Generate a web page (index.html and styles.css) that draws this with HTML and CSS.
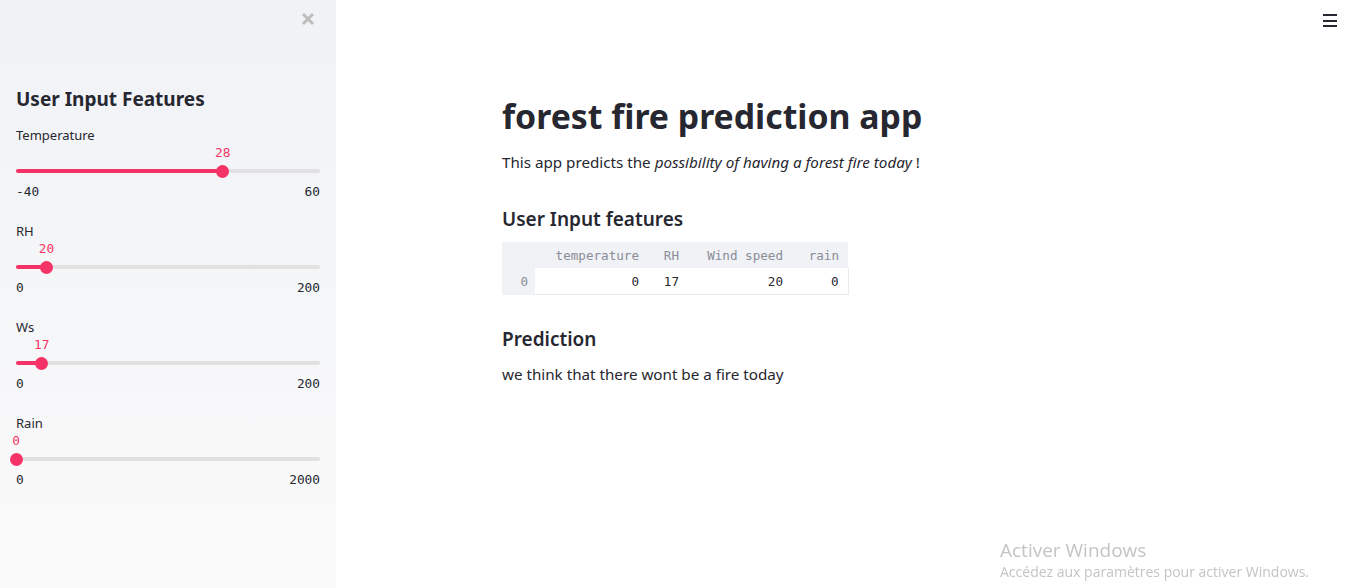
FILE: index.html
```html
<!DOCTYPE html>
<html lang="en">
<head>
<meta charset="utf-8">
<title>forest fire prediction app</title>
<link rel="stylesheet" href="styles.css">
</head>
<body>
<div class="app">
  <aside class="sidebar">
    <div class="close-row">
      <svg class="close" width="14" height="14" viewBox="0 0 14 14"><path d="M2 2L12 12M12 2L2 12" stroke="#bdbdbd" stroke-width="3" stroke-linecap="butt"/></svg>
    </div>
    <h2 class="side-title">User Input Features</h2>

    <div class="slider">
      <div class="s-label">Temperature</div>
      <div class="s-track-wrap">
        <div class="s-track">
          <div class="s-fill" style="width:68%"></div>
          <div class="s-thumb" style="left:68%"><span class="s-value">28</span></div>
        </div>
      </div>
      <div class="s-ticks"><span>-40</span><span>60</span></div>
    </div>

    <div class="slider">
      <div class="s-label">RH</div>
      <div class="s-track-wrap">
        <div class="s-track">
          <div class="s-fill" style="width:10%"></div>
          <div class="s-thumb" style="left:10%"><span class="s-value">20</span></div>
        </div>
      </div>
      <div class="s-ticks"><span>0</span><span>200</span></div>
    </div>

    <div class="slider">
      <div class="s-label">Ws</div>
      <div class="s-track-wrap">
        <div class="s-track">
          <div class="s-fill" style="width:8.5%"></div>
          <div class="s-thumb" style="left:8.5%"><span class="s-value">17</span></div>
        </div>
      </div>
      <div class="s-ticks"><span>0</span><span>200</span></div>
    </div>

    <div class="slider">
      <div class="s-label">Rain</div>
      <div class="s-track-wrap">
        <div class="s-track">
          <div class="s-fill" style="width:0%"></div>
          <div class="s-thumb" style="left:0%"><span class="s-value">0</span></div>
        </div>
      </div>
      <div class="s-ticks"><span>0</span><span>2000</span></div>
    </div>
  </aside>

  <main class="main">
    <div class="topbar">
      <div class="hamburger"><span></span><span></span><span></span></div>
    </div>
    <div class="content">
      <h1 class="title">forest fire prediction app</h1>
      <p class="intro">This app predicts the <em>possibility of having a forest fire today</em> !</p>
      <h3 class="section">User Input features</h3>
      <table class="df">
        <thead>
          <tr><th class="idx"></th><th class="c1">temperature</th><th class="c2">RH</th><th class="c3">Wind speed</th><th class="c4">rain</th></tr>
        </thead>
        <tbody>
          <tr><th class="idx">0</th><td>0</td><td>17</td><td>20</td><td>0</td></tr>
        </tbody>
      </table>
      <h3 class="section pred">Prediction</h3>
      <p class="result">we think that there wont be a fire today</p>
    </div>
  </main>
</div>
<div class="watermark">
  <div class="wm-1">Activer Windows</div>
  <div class="wm-2">Accédez aux paramètres pour activer Windows.</div>
</div>
</body>
</html>
```

FILE: styles.css
```css
html, body {
  margin: 0;
  padding: 0;
  height: 100%;
  overflow: hidden;
}
body {
  font-family: "Noto Sans", "Open Sans", sans-serif;
  color: #262730;
  background: #ffffff;
}
.app {
  display: flex;
  height: 588px;
}
.sidebar {
  width: 336px;
  flex: none;
  box-sizing: border-box;
  padding: 0 16px;
  background: linear-gradient(180deg, #f0f2f6 0%, #fafafa 100%);
}
.close-row {
  display: flex;
  justify-content: flex-end;
  height: 85px;
  padding-top: 12px;
  box-sizing: border-box;
  padding-right: 5px;
}
.close { display: block; }
.side-title {
  margin: 0 0 12px;
  font-size: 19px;
  font-weight: 700;
  line-height: 28px;
}
.slider {
  margin-bottom: 20px;
}
.s-label {
  font-size: 13px;
  line-height: 20px;
  height: 20px;
}
.s-track-wrap {
  padding-top: 16px;
  height: 20px;
  display: flex;
  align-items: center;
}
.s-track {
  position: relative;
  width: 100%;
  height: 4px;
  border-radius: 2px;
  background: #e1e1e1;
}
.s-fill {
  height: 100%;
  border-radius: 2px;
  background: #f63366;
}
.s-thumb {
  position: absolute;
  top: 50%;
  width: 13px;
  height: 13px;
  margin: -6.5px 0 0 -6.5px;
  border-radius: 50%;
  background: #f63366;
}
.s-value {
  position: absolute;
  left: 50%;
  bottom: 17px;
  transform: translateX(-50%);
  font-family: "DejaVu Sans Mono", monospace;
  font-size: 12.8px;
  line-height: 16px;
  color: #f63366;
  white-space: nowrap;
}
.s-ticks {
  display: flex;
  justify-content: space-between;
  height: 20px;
  line-height: 22px;
  font-family: "DejaVu Sans Mono", monospace;
  font-size: 12.8px;
  color: #262730;
}
.main {
  flex: 1;
  display: flex;
  flex-direction: column;
}
.topbar {
  display: flex;
  justify-content: flex-end;
  padding: 14px 23px 0 0;
  height: 92px;
  box-sizing: border-box;
}
.hamburger {
  display: flex;
  flex-direction: column;
  gap: 3.5px;
  width: 14px;
}
.hamburger span {
  display: block;
  height: 2px;
  background: #262730;
}
.content {
  padding-left: 166px;
}
.title {
  margin: 0;
  font-size: 33.8px;
  font-weight: 700;
  line-height: 48px;
}
.intro, .result {
  margin: 10px 0 0;
  font-size: 15.2px;
  line-height: 24px;
}
.section {
  margin: 31px 0 0;
  font-size: 19px;
  font-weight: 600;
  line-height: 28px;
}
.df {
  margin-top: 9px;
  border-collapse: collapse;
  font-family: "DejaVu Sans Mono", monospace;
  font-size: 12.6px;
}
.df th, .df td {
  height: 26px;
  padding: 2px 9px 0 0;
  text-align: right;
  box-sizing: border-box;
  line-height: 24px;
}
.df thead th {
  background: #f0f2f6;
  color: #8a8c96;
  font-weight: 400;
}
.df .idx {
  width: 33px;
  background: #f0f2f6;
  color: #8a8c96;
  font-weight: 400;
  padding-right: 7px;
}
.df .c1 { width: 113px; }
.df .c2 { width: 40px; }
.df .c3 { width: 104px; }
.df .c4 { width: 56px; }
.df tbody td {
  background: #ffffff;
  color: #262730;
  border-bottom: 1px solid #e8eaef;
}
.df tbody td:last-child {
  border-right: 1px solid #e8eaef;
}
.pred {
  margin-top: 30px;
}
.result {
  margin-top: 9px;
}
.watermark {
  position: fixed;
  left: 1000px;
  top: 538px;
  color: #c4c4c4;
  font-family: "Open Sans", "Noto Sans", sans-serif;
}
.wm-1 {
  font-size: 19px;
  line-height: 24px;
}
.wm-2 {
  font-size: 14px;
  line-height: 20px;
}
```
